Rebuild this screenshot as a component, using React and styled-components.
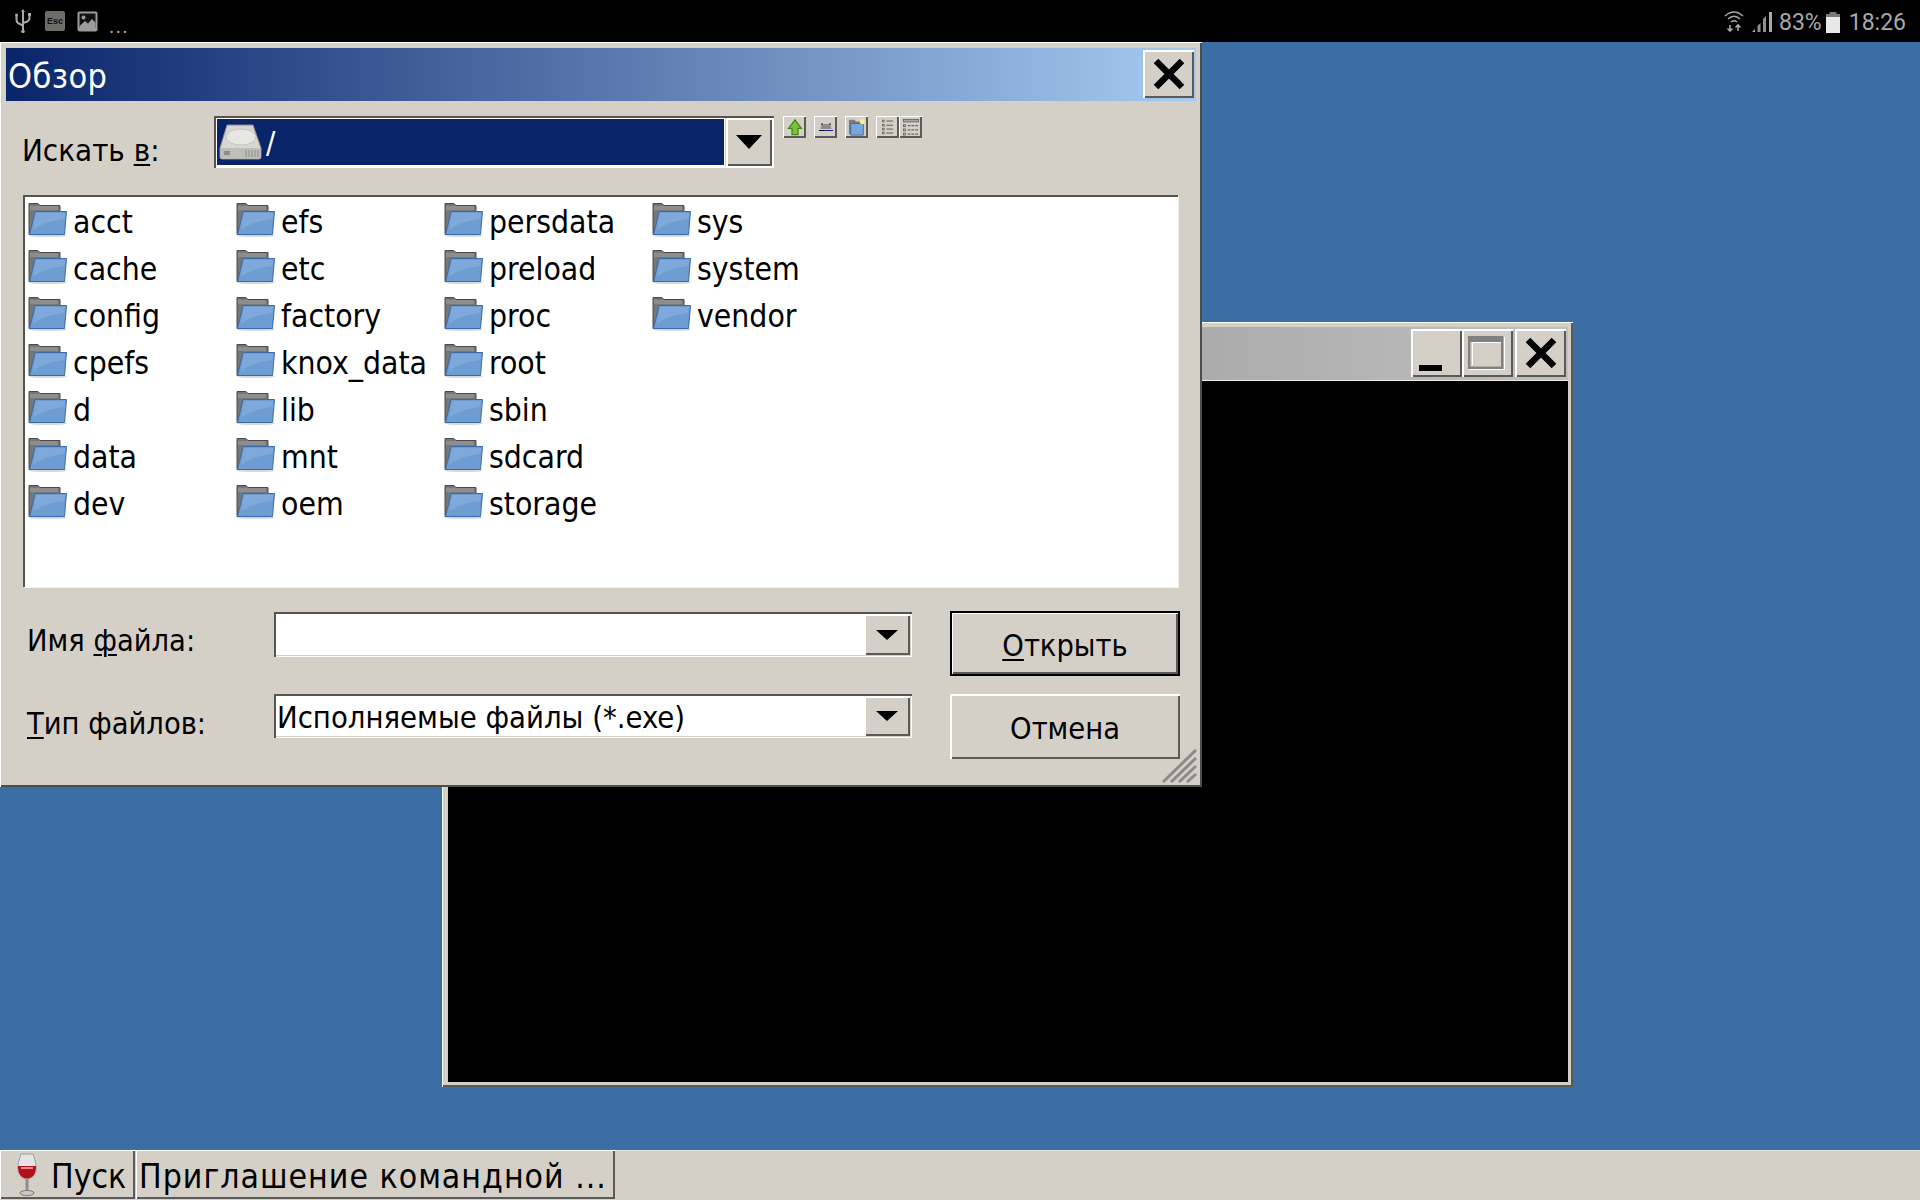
import React from 'react'
import styled, { createGlobalStyle, css } from 'styled-components'

const GlobalStyle = createGlobalStyle`
  html, body { margin: 0; padding: 0; background: #3b6ea5; }
  * { box-sizing: border-box; }
  body { font-family: "DejaVu Sans", "Liberation Sans", sans-serif; font-stretch: condensed; color: #000; }
`

const raised = css`
  background: #d4d0c8;
  box-shadow: inset 2px 2px 0 #fff, inset -2px -2px 0 #5a5a58;
`

const Screen = styled.div`
  width: 1920px;
  height: 1200px;
  display: flex;
  flex-direction: column;
  overflow: hidden;
`
const StatusBar = styled.div`
  height: 42px;
  background: #000;
  display: flex;
  align-items: center;
  justify-content: space-between;
  padding: 0 14px 0 15px;
  color: #a9a9a9;
  font-family: Roboto, sans-serif;
  font-stretch: normal;
`
const StatusGroup = styled.div`
  display: flex;
  align-items: center;
`
const StatusText = styled.span`
  font-size: 23px;
  line-height: 42px;
  padding-top: 3px;
  margin-left: ${p => p.$left || 0}px;
`
const EscIcon = styled.span`
  width: 20px;
  height: 20px;
  margin: 0 12px 0 14px;
  border-radius: 2px;
  background: #6d6d68;
  color: #111;
  font: bold 9px/20px "Liberation Sans", sans-serif;
  text-align: center;
`
const Dots = styled.span`
  margin-left: 11px;
  font-size: 20px;
  line-height: 20px;
  letter-spacing: 1.5px;
  padding-top: 10px;
`
const Desktop = styled.div`
  position: relative;
  flex: 1;
  background: #3b6ea5;
`
const ConsoleWindow = styled.div`
  position: absolute;
  left: 442px;
  top: 280px;
  width: 1131px;
  height: 765px;
  padding: 5px 5px 5px 6px;
  background: #d4d0c8;
  display: flex;
  flex-direction: column;
  box-shadow: inset 1px 1px 0 #fff, inset -2px -2px 0 #5a5a58;
`
const ConsoleTitle = styled.div`
  height: 54px;
  padding: 2px 2px 3px 0;
  display: flex;
  justify-content: flex-end;
  align-items: stretch;
  background: linear-gradient(90deg, #808080, #c0c0c0);
  border-bottom: 1px solid #eeeae2;
`
const ConsoleBody = styled.div`
  flex: 1;
  background: #000;
`
const WinButton = styled.div`
  ${raised}
  width: 51px;
  display: flex;
  align-items: center;
  justify-content: center;
  margin-left: ${p => p.$gap || 0}px;
`
const Dialog = styled.div`
  position: absolute;
  left: 0;
  top: 0;
  width: 1202px;
  height: 745px;
  padding: 6px 6px 0 6px;
  background: #d4d0c8;
  box-shadow: inset 1px 1px 0 #fff, inset -2px -2px 0 #4c4c4a;
`
const TitleBar = styled.div`
  height: 53px;
  padding: 2px 2px 3px 2px;
  display: flex;
  align-items: stretch;
  justify-content: space-between;
  color: #fff;
  background: linear-gradient(90deg, #0a246a, #a6caf0);
`
const TitleText = styled.span`
  font-size: 34px;
  line-height: 46px;
  padding-top: 3px;
  letter-spacing: 0.4px;
`
const LookRow = styled.div`
  display: flex;
  align-items: flex-start;
  height: 94px;
  padding: 15px 0 0 16px;
`
const LookLabel = styled.span`
  width: 192px;
  font-size: 31px;
  line-height: 38px;
  padding-top: 15px;
`
const Mnemonic = styled.span`
  text-decoration: underline;
  text-decoration-thickness: 2px;
  text-underline-offset: 3px;
`
const LookCombo = styled.div`
  width: 560px;
  height: 52px;
  padding: 2px;
  display: flex;
  gap: 1px;
  background: #d4d0c8;
  box-shadow: inset 2px 2px 0 #55544f, inset -2px -2px 0 #fff;
`
const LookField = styled.div`
  flex: 1;
  display: flex;
  align-items: center;
  gap: 4px;
  padding-left: 3px;
  color: #fff;
  background: #0a246a;
  font-size: 31px;
  box-shadow: inset 0 0 0 1px #fff;
`
const ComboButton = styled.div`
  ${raised}
  width: ${p => p.$w}px;
  display: flex;
  align-items: center;
  justify-content: center;
`
const Arrow = styled.span`
  width: 0;
  height: 0;
  border-left: ${p => p.$s}px solid transparent;
  border-right: ${p => p.$s}px solid transparent;
  border-top: ${p => p.$h}px solid #000;
`
const ToolGroup = styled.div`
  display: flex;
  margin-left: 9px;
  gap: 8px;
`
const ToolCluster = styled.div`
  display: flex;
`
const ToolButton = styled.div`
  ${raised}
  box-shadow: inset 1px 1px 0 #fff, inset -2px -2px 0 #5a5a58;
  width: 23px;
  height: 22px;
  display: flex;
  align-items: center;
  justify-content: center;
`
const FileList = styled.div`
  margin-left: 17px;
  width: 1155px;
  height: 392px;
  padding: 7px 0 0 5px;
  background: #fff;
  display: grid;
  grid-auto-flow: column;
  grid-template-rows: repeat(7, 47px);
  grid-template-columns: repeat(4, 208px);
  box-shadow: inset 2px 2px 0 #55544f, 1px 1px 0 #f4f2ec;
`
const FileItem = styled.div`
  display: flex;
  align-items: flex-start;
  gap: 5px;
  font-size: 31.6px;
  line-height: 40px;
  white-space: nowrap;
`
const BottomArea = styled.div`
  display: grid;
  grid-template-columns: 209px 638px 230px;
  column-gap: 38px;
  row-gap: 18px;
  margin: 24px 0 0 21px;
`
const FormLabel = styled.span`
  font-size: 30.5px;
  line-height: 38px;
  padding-top: 11px;
`
const Field = styled.div`
  height: ${p => p.$h}px;
  margin-top: ${p => p.$top}px;
  display: flex;
  padding: 2px;
  background: #fff;
  box-shadow: inset 2px 2px 0 #55544f, inset -1px -1px 0 #fff, inset -2px -2px 0 #d4d0c8;
`
const FieldText = styled.div`
  flex: 1;
  font-size: 30.7px;
  line-height: 38px;
  padding: 3px 0 0 1px;
`
const DialogButton = styled.div`
  ${raised}
  height: ${p => p.$h}px;
  font-size: 30.5px;
  line-height: ${p => p.$h + 4}px;
  text-align: center;
  ${p => p.$default && css`
    border: 2px solid #000;
    box-shadow: inset 1px 1px 0 #fff, inset -2px -2px 0 #5a5a58;
    line-height: ${p.$h}px;
  `}
`
const Grip = styled.svg`
  position: absolute;
  right: 5px;
  bottom: 4px;
`
const TaskBar = styled.div`
  height: 50px;
  background: #d4d0c8;
  display: flex;
  gap: 1px;
  box-shadow: inset 0 1px 0 #e8e6e0;
  padding-bottom: 1px;
`
const TaskButton = styled.div`
  ${raised}
  width: ${p => p.$w}px;
  display: flex;
  align-items: center;
  padding-left: ${p => p.$pad}px;
  white-space: nowrap;
  box-shadow: inset 1px 1px 0 #fff, inset -2px -2px 0 #5a5a58;
`
const TaskText = styled.span`
  font-size: 33.5px;
  line-height: 50px;
  padding-top: 5px;
  margin-left: ${p => p.$left || 0}px;
  letter-spacing: ${p => p.$track || 0}px;
`

const FolderIcon = () => (
  <svg width="40" height="36" viewBox="0 0 40 36" style={{ flex: 'none' }}>
    <ellipse cx="20" cy="33.5" rx="19" ry="1.6" fill="#d8d8d8" />
    <path d="M1 1.5 H10 L12 3.5 H32 V32.5 H1 Z" fill="#77777a" stroke="#4a4a4a" />
    <path d="M2 5 H30 M2 7 H30" stroke="#a5a5a5" />
    <path d="M7 9.5 H38.5 L36.5 32.5 H1.5 Z" fill="#6d9dd2" stroke="#3a6aa8" />
    <path d="M8 11 H37 L36.6 17 C26 18 14 21 5 28 Z" fill="#7fa9da" />
  </svg>
)

const DriveIcon = () => (
  <svg width="43" height="36" viewBox="0 0 43 36">
    <path d="M8 1 H34 L42 24 V33 Q42 35 40 35 H3 Q1 35 1 33 V24 Z" fill="#d6d6d4" stroke="#8a8a88" />
    <ellipse cx="22" cy="13" rx="15" ry="8" fill="#e6e6e4" stroke="#c4c4c2" />
    <rect x="1.5" y="24" width="40" height="10.5" fill="#bdbdbb" />
    <path d="M5 27 H11 V31 H5 Z" fill="#8e8e8c" />
    <path d="M27 26 V33 M30 26 V33 M33 26 V33 M36 26 V33 M39 26 V33" stroke="#8e8e8c" />
  </svg>
)

const UpIcon = () => (
  <svg width="16" height="17" viewBox="0 0 17 20">
    <path d="M8.5 1 L16 11 H12 V18.5 H5 V11 H1 Z" fill="#7cc13b" stroke="#3e8a0d" strokeWidth="1.5" />
  </svg>
)

const DesktopIcon = () => (
  <svg width="14" height="8" viewBox="0 0 14 8">
    <path d="M2.5 1 H11.5 L12.5 6 H1.5 Z" fill="#8f8f8a" />
    <path d="M3 0 V2 M11 0 V2" stroke="#222" />
    <path d="M0 7 H5 V8 H0 Z" fill="#111" />
    <path d="M5 7 H14 V8 H5 Z" fill="#1a1a8a" />
  </svg>
)

const NewFolderIcon = () => (
  <svg width="18" height="18" viewBox="0 0 20 20">
    <path d="M1 2 H7 L9 4 H15 V18 H1 Z" fill="#7d7d7d" />
    <path d="M3 6 H17 V19 H3 Z" fill="#79a6d8" stroke="#3a6aa8" />
    <circle cx="16" cy="4" r="3" fill="#f6f08e" />
  </svg>
)

const ListIcon = () => (
  <svg width="12" height="16" viewBox="0 0 14 18" fill="none" stroke="#6b6b66">
    {[2, 7, 11.5, 16].map(y => (
      <g key={y}>
        <rect x="0.5" y={y - 1} width="2" height="2" />
        <path d={`M5 ${y} H13`} strokeWidth="1.3" />
      </g>
    ))}
  </svg>
)

const DetailIcon = () => (
  <svg width="16" height="17" viewBox="0 0 17 18" fill="none" stroke="#6b6b66">
    <rect x="0.5" y="0.5" width="16" height="2.5" fill="#a8a8a4" />
    {[7, 11.5, 16].map(y => (
      <g key={y}>
        <rect x="0.5" y={y - 1} width="2" height="2" />
        <path d={`M5 ${y} H16`} strokeDasharray="3 1" strokeWidth="1.3" />
      </g>
    ))}
  </svg>
)

const CloseGlyph = () => (
  <svg width="38" height="38" viewBox="0 0 38 38">
    <path d="M6 6 L32 32 M32 6 L6 32" stroke="#000" strokeWidth="6.5" />
  </svg>
)

const MinimizeGlyph = () => (
  <svg width="23" height="38" viewBox="0 0 23 38" style={{ marginRight: 12 }}>
    <rect y="31" width="23" height="6" fill="#000" />
  </svg>
)

const MaximizeGlyph = () => (
  <svg width="37" height="34" viewBox="0 0 37 34" style={{ marginRight: 3 }}>
    <path d="M1 33.5 H36.5 V1" fill="none" stroke="#fff" />
    <rect x="1.2" y="1.2" width="33" height="30.6" fill="none" stroke="#808080" strokeWidth="2.4" />
    <rect x="1" y="1" width="33.5" height="5" fill="#808080" />
    <path d="M4.5 29 V6.5 H33" fill="none" stroke="#fff" />
  </svg>
)

const WineIcon = () => (
  <svg width="22" height="44" viewBox="0 0 22 44">
    <path d="M5 1 H17 Q21 12 20 18 Q18 26 11 26 Q4 26 2 18 Q1 12 5 1 Z" fill="#e4e4e4" stroke="#a0a0a0" />
    <path d="M2 13 H20 Q20 25 11 25.5 Q2 25 2 13 Z" fill="#b4101c" />
    <path d="M5 15 H17" stroke="#ee8a8a" strokeWidth="2" />
    <path d="M11 26 V38" stroke="#8e8e8e" strokeWidth="3" />
    <ellipse cx="11" cy="40" rx="7" ry="2.6" fill="#c8c8c8" stroke="#7a7a7a" />
  </svg>
)

const UsbIcon = () => (
  <svg width="16" height="26" viewBox="0 0 16 26" fill="none" stroke="#a9a9a9" strokeWidth="2">
    <path d="M8 3 V24" />
    <path d="M8 1 L10 4 H6 Z" fill="#a9a9a9" stroke="none" />
    <path d="M1.5 8 V12 Q1.5 15 5 16 L8 18" />
    <path d="M14.5 8 V10 Q14.5 13 11 14 L8 15" />
    <circle cx="8" cy="23.5" r="1.8" fill="#a9a9a9" stroke="none" />
    <circle cx="1.5" cy="7" r="1.5" fill="#a9a9a9" stroke="none" />
    <rect x="13" y="5" width="3" height="3" fill="#a9a9a9" stroke="none" />
  </svg>
)

const PictureIcon = () => (
  <svg width="21" height="21" viewBox="0 0 21 21">
    <rect x="0.5" y="0.5" width="20" height="20" rx="2" fill="#9c9c9c" />
    <rect x="2.5" y="2.5" width="16" height="14.5" fill="#111" />
    <circle cx="6.5" cy="6.5" r="2" fill="#9c9c9c" />
    <path d="M2.5 15 L8 10 L11 12.5 L15 8 L18.5 11.5 V17 H2.5 Z" fill="#9c9c9c" />
  </svg>
)

const WifiIcon = () => (
  <svg width="20" height="22" viewBox="0 0 20 22" fill="none" stroke="#a9a9a9" strokeWidth="1.6">
    <path d="M1 6 Q10 -2 19 6" />
    <path d="M4 9 Q10 3.5 16 9" />
    <path d="M7 12 Q10 9.5 13 12" />
    <path d="M6 15 V21 M3.5 18.5 L6 21 L8.5 18.5" />
    <path d="M14 21 V15 M11.5 17.5 L14 15 L16.5 17.5" />
  </svg>
)

const SignalIcon = () => (
  <svg width="21" height="21" viewBox="0 0 21 21" fill="#a9a9a9" style={{ marginLeft: 8 }}>
    <path d="M0 21 L3 18 V21 Z" />
    <path d="M5.5 21 V15 L8.5 12 V21 Z" opacity="0.85" />
    <path d="M11 21 V8 L14 5 V21 Z" opacity="0.85" />
    <rect x="17" y="1" width="3" height="20" />
  </svg>
)

const BatteryIcon = () => (
  <svg width="14" height="21" viewBox="0 0 14 21" style={{ margin: '2px 9px 0 4px' }}>
    <rect x="3.5" y="0" width="7" height="2" fill="#777" />
    <rect x="0" y="2" width="14" height="3" fill="#777" />
    <rect x="0" y="5" width="14" height="16" fill="#e8e8e8" />
  </svg>
)

const columns = [
  ['acct', 'cache', 'config', 'cpefs', 'd', 'data', 'dev'],
  ['efs', 'etc', 'factory', 'knox_data', 'lib', 'mnt', 'oem'],
  ['persdata', 'preload', 'proc', 'root', 'sbin', 'sdcard', 'storage'],
  ['sys', 'system', 'vendor'],
]

export default function App() {
  return (
    <Screen>
      <GlobalStyle />
      <StatusBar>
        <StatusGroup>
          <UsbIcon />
          <EscIcon>Esc</EscIcon>
          <PictureIcon />
          <Dots>...</Dots>
        </StatusGroup>
        <StatusGroup>
          <WifiIcon />
          <SignalIcon />
          <StatusText $left={6}>83%</StatusText>
          <BatteryIcon />
          <StatusText>18:26</StatusText>
        </StatusGroup>
      </StatusBar>
      <Desktop>
        <ConsoleWindow>
          <ConsoleTitle>
            <WinButton><MinimizeGlyph /></WinButton>
            <WinButton><MaximizeGlyph /></WinButton>
            <WinButton $gap={2}><CloseGlyph /></WinButton>
          </ConsoleTitle>
          <ConsoleBody />
        </ConsoleWindow>
        <Dialog>
          <TitleBar>
            <TitleText>Обзор</TitleText>
            <WinButton><CloseGlyph /></WinButton>
          </TitleBar>
          <LookRow>
            <LookLabel>Искать <Mnemonic>в</Mnemonic>:</LookLabel>
            <LookCombo>
              <LookField><DriveIcon />/</LookField>
              <ComboButton $w={46}><Arrow $s={13} $h={14} /></ComboButton>
            </LookCombo>
            <ToolGroup>
              <ToolButton><UpIcon /></ToolButton>
              <ToolButton><DesktopIcon /></ToolButton>
              <ToolButton><NewFolderIcon /></ToolButton>
              <ToolCluster>
                <ToolButton><ListIcon /></ToolButton>
                <ToolButton><DetailIcon /></ToolButton>
              </ToolCluster>
            </ToolGroup>
          </LookRow>
          <FileList>
            {columns.flatMap((col, c) => col.map(name => (
              <FileItem key={c + name} style={{ gridColumn: c + 1 }}>
                <FolderIcon />
                {name}
              </FileItem>
            )))}
          </FileList>
          <BottomArea>
            <FormLabel>Имя <Mnemonic>ф</Mnemonic>айла:</FormLabel>
            <Field $h={45} $top={1}>
              <FieldText />
              <ComboButton $w={46}><Arrow $s={11} $h={10} /></ComboButton>
            </Field>
            <DialogButton $h={65} $default><Mnemonic>О</Mnemonic>ткрыть</DialogButton>
            <FormLabel><Mnemonic>Т</Mnemonic>ип файлов:</FormLabel>
            <Field $h={44} $top={0}>
              <FieldText>Исполняемые файлы (*.exe)</FieldText>
              <ComboButton $w={46}><Arrow $s={11} $h={10} /></ComboButton>
            </Field>
            <DialogButton $h={65}>Отмена</DialogButton>
          </BottomArea>
          <Grip width="35" height="34" viewBox="0 0 35 34" stroke="#8a8a86" strokeWidth="3">
            <path d="M1 33 L34 1 M9 33 L34 9 M17 33 L34 17 M25 33 L34 25" />
          </Grip>
        </Dialog>
      </Desktop>
      <TaskBar>
        <TaskButton $w={135} $pad={16}>
          <WineIcon />
          <TaskText $left={13}>Пуск</TaskText>
        </TaskButton>
        <TaskButton $w={479} $pad={3}>
          <TaskText $track={1}>Приглашение командной ...</TaskText>
        </TaskButton>
      </TaskBar>
    </Screen>
  )
}
